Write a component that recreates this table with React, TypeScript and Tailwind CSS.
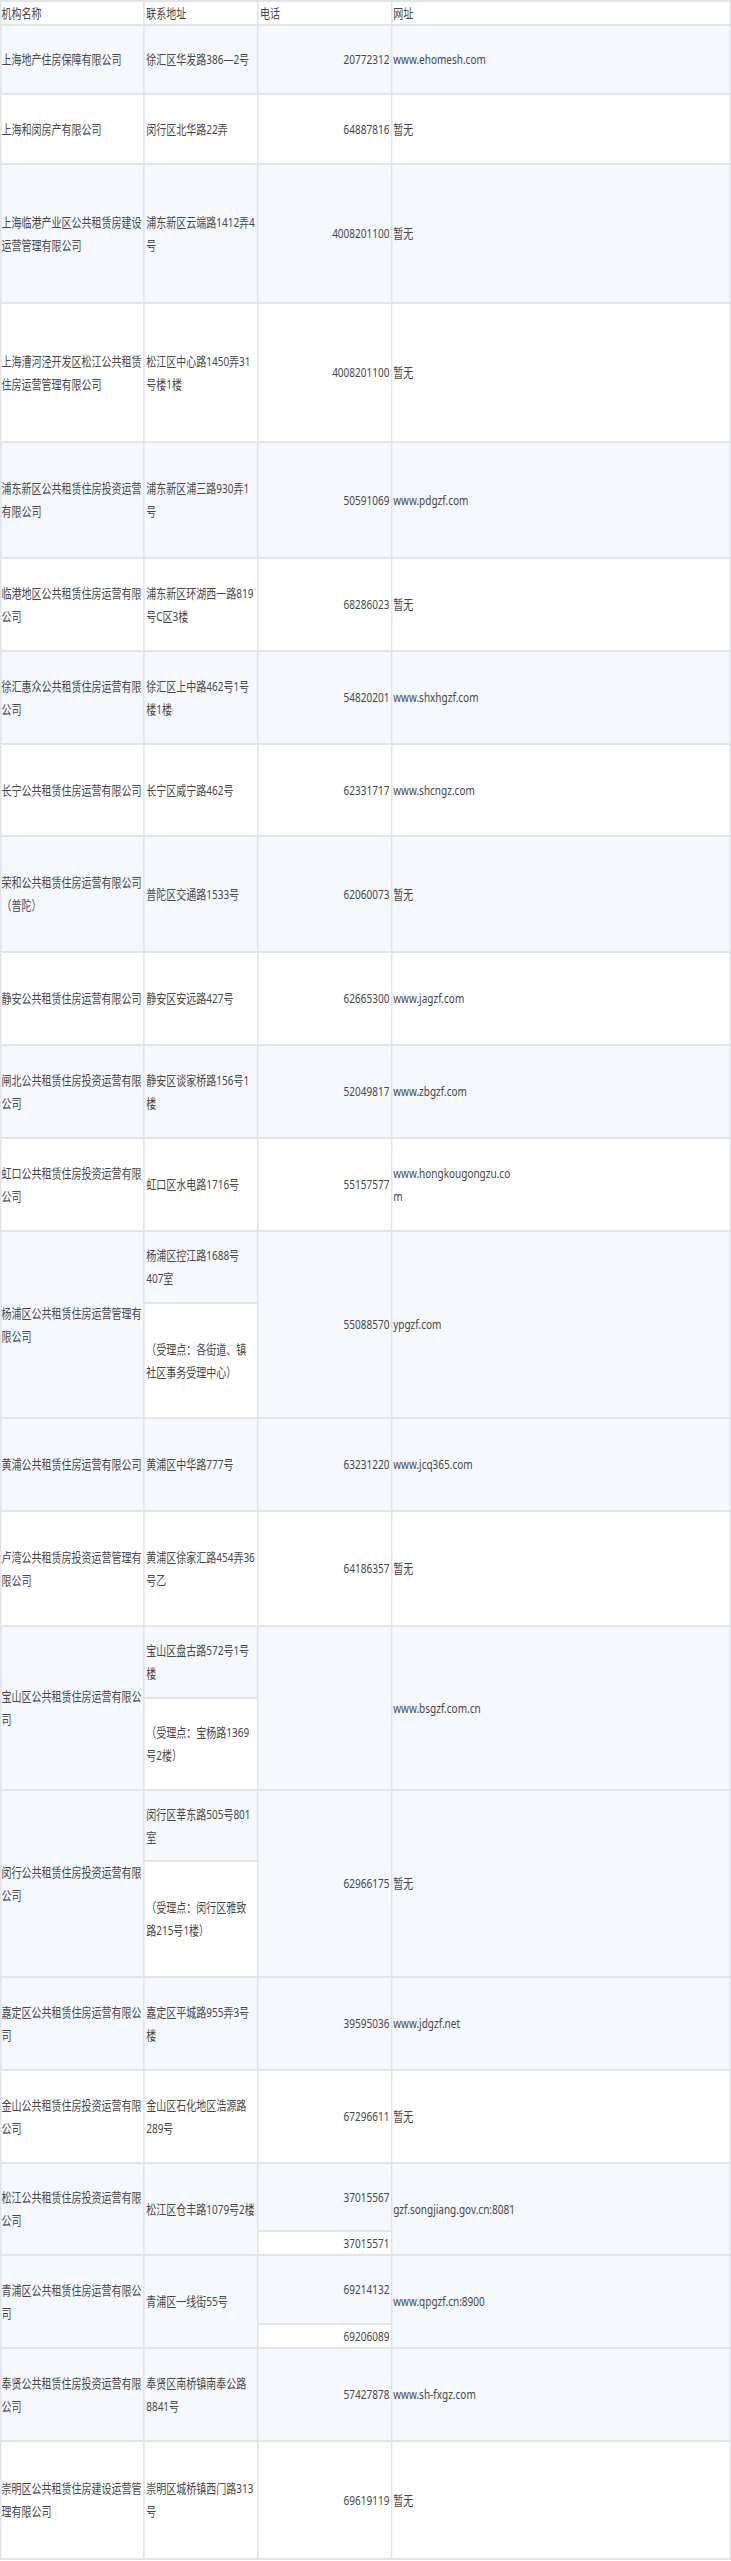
import React from "react";

type Cell = { col: 1 | 2 | 3 | 4; text: string; tint: boolean; span?: boolean; head?: boolean };

const cells: Cell[] = [];

function head() {
  cells.push({ col: 1, text: "机构名称", tint: false, head: true });
  cells.push({ col: 2, text: "联系地址", tint: false, head: true });
  cells.push({ col: 3, text: "电话", tint: false, head: true });
  cells.push({ col: 4, text: "网址", tint: false, head: true });
}

function simple(name: string, addr: string, phone: string, url: string, tint: boolean) {
  cells.push({ col: 1, text: name, tint });
  cells.push({ col: 2, text: addr, tint });
  cells.push({ col: 3, text: phone, tint });
  cells.push({ col: 4, text: url, tint });
}

function splitAddr(name: string, a1: string, a2: string, phone: string, url: string) {
  cells.push({ col: 1, text: name, tint: true, span: true });
  cells.push({ col: 2, text: a1, tint: true });
  cells.push({ col: 3, text: phone, tint: true, span: true });
  cells.push({ col: 4, text: url, tint: true, span: true });
  cells.push({ col: 2, text: a2, tint: false });
}

function splitPhone(name: string, addr: string, p1: string, p2: string, url: string) {
  cells.push({ col: 1, text: name, tint: true, span: true });
  cells.push({ col: 2, text: addr, tint: true, span: true });
  cells.push({ col: 3, text: p1, tint: true });
  cells.push({ col: 4, text: url, tint: true, span: true });
  cells.push({ col: 3, text: p2, tint: false });
}

head();
simple("上海地产住房保障有限公司", "徐汇区华发路386—2号", "20772312", "www.ehomesh.com", true);
simple("上海和闵房产有限公司", "闵行区北华路22弄", "64887816", "暂无", false);
simple("上海临港产业区公共租赁房建设运营管理有限公司", "浦东新区云端路1412弄4号", "4008201100", "暂无", true);
simple("上海漕河泾开发区松江公共租赁住房运营管理有限公司", "松江区中心路1450弄31号楼1楼", "4008201100", "暂无", false);
simple("浦东新区公共租赁住房投资运营有限公司", "浦东新区浦三路930弄1号", "50591069", "www.pdgzf.com", true);
simple("临港地区公共租赁住房运营有限公司", "浦东新区环湖西一路819号C区3楼", "68286023", "暂无", false);
simple("徐汇惠众公共租赁住房运营有限公司", "徐汇区上中路462号1号楼1楼", "54820201", "www.shxhgzf.com", true);
simple("长宁公共租赁住房运营有限公司", "长宁区威宁路462号", "62331717", "www.shcngz.com", false);
simple("荣和公共租赁住房运营有限公司（普陀）", "普陀区交通路1533号", "62060073", "暂无", true);
simple("静安公共租赁住房运营有限公司", "静安区安远路427号", "62665300", "www.jagzf.com", false);
simple("闸北公共租赁住房投资运营有限公司", "静安区谈家桥路156号1楼", "52049817", "www.zbgzf.com", true);
simple("虹口公共租赁住房投资运营有限公司", "虹口区水电路1716号", "55157577", "www.hongkougongzu.com", false);
splitAddr("杨浦区公共租赁住房运营管理有限公司", "杨浦区控江路1688号407室", "（受理点：各街道、镇社区事务受理中心）", "55088570", "ypgzf.com");
simple("黄浦公共租赁住房运营有限公司", "黄浦区中华路777号", "63231220", "www.jcq365.com", true);
simple("卢湾公共租赁房投资运营管理有限公司", "黄浦区徐家汇路454弄36号乙", "64186357", "暂无", false);
splitAddr("宝山区公共租赁住房运营有限公司", "宝山区盘古路572号1号楼", "（受理点：宝杨路1369号2楼）", "", "www.bsgzf.com.cn");
splitAddr("闵行公共租赁住房投资运营有限公司", "闵行区莘东路505号801室", "（受理点：闵行区雅致路215号1楼）", "62966175", "暂无");
simple("嘉定区公共租赁住房运营有限公司", "嘉定区平城路955弄3号楼", "39595036", "www.jdgzf.net", true);
simple("金山公共租赁住房投资运营有限公司", "金山区石化地区浩源路289号", "67296611", "暂无", false);
splitPhone("松江公共租赁住房投资运营有限公司", "松江区仓丰路1079号2楼", "37015567", "37015571", "gzf.songjiang.gov.cn:8081");
splitPhone("青浦区公共租赁住房运营有限公司", "青浦区一线街55号", "69214132", "69206089", "www.qpgzf.cn:8900");
simple("奉贤公共租赁住房投资运营有限公司", "奉贤区南桥镇南奉公路8841号", "57427878", "www.sh-fxgz.com", true);
simple("崇明区公共租赁住房建设运营管理有限公司", "崇明区城桥镇西门路313号", "69619119", "暂无", false);

function CellView({ c }: { c: Cell }) {
  const bg = c.tint ? "bg-[#f5f8fc]" : "bg-white";
  const span = c.span ? "row-span-2" : "";
  if (c.col === 1) {
    return (
      <div className={`flex items-center pr-[1px] ${bg} ${span}`}>
        <div className="w-full">{c.text}</div>
      </div>
    );
  }
  if (c.col === 2) {
    return (
      <div className={`flex items-center px-[2px] ${bg} ${span}`}>
        <div className="w-full">{c.text}</div>
      </div>
    );
  }
  if (c.col === 3) {
    return (
      <div className={`flex items-center pl-[2px] pr-[2px] ${bg} ${span}`}>
        <div className={c.head ? "w-full text-left" : "w-full text-right"}>{c.text}</div>
      </div>
    );
  }
  return (
    <div className={`flex items-center pl-[1px] ${bg} ${span}`}>
      <div className="w-[162px] break-all">{c.text}</div>
    </div>
  );
}

export default function App() {
  return (
    <div className="w-[731px] overflow-hidden bg-white">
      <div
        className="w-[950px] origin-top-left scale-x-[0.7695] grid grid-cols-[184px_146px_172px_438px] grid-rows-[22px_67px_68px_137px_137px_114px_91px_91px_90px_114px_91px_91px_91px_70px_113px_91px_113px_70px_90px_69px_114px_91px_91px_66px_22px_67px_22px_91px_116px] gap-[2px] p-[2px] bg-[#e1e5ea] text-[13px] leading-[23px] text-[#474747]"
        style={{ fontFamily: '"Noto Sans", "Noto Sans CJK SC", sans-serif' }}
      >
        {cells.map((c, i) => (
          <CellView key={i} c={c} />
        ))}
      </div>
    </div>
  );
}
